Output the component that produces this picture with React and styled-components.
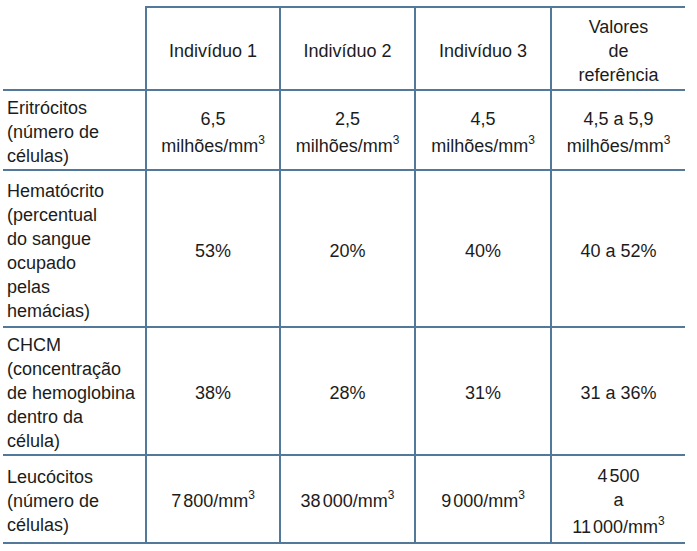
import React from 'react';
import styled, { createGlobalStyle } from 'styled-components';

const GlobalStyle = createGlobalStyle`
  html, body {
    margin: 0;
    padding: 0;
    background: #ffffff;
  }
  body {
    font-family: "Liberation Sans", Arial, sans-serif;
    color: #1c1c1c;
  }
`;

const LINE = '2px solid #52789a';

const Table = styled.table`
  border-collapse: collapse;
  table-layout: fixed;
  width: 682px;
  margin: 6px 0 0 3px;
  font-size: 18px;
  line-height: 24px;
`;

const Row = styled.tr`
  height: ${p => p.h}px;
  border-bottom: ${LINE};
`;

const Cell = styled.td`
  padding: 4px 4px 0;
  vertical-align: middle;
  text-align: ${p => (p.label ? 'left' : 'center')};
  border-left: ${p => (p.label ? 'none' : LINE)};
  border-top: ${p => (p.blank ? 'none' : LINE)};
`;

// a line that carries a superscript sits a little lower, as in the source
const SupLine = styled.span`
  display: block;
  margin-top: ${p => p.gap}px;
`;

const Sup = styled.sup`
  font-size: 12px;
  line-height: 0;
  vertical-align: baseline;
  position: relative;
  top: -8px;
`;

// narrow gap between groups of thousands
const Gap = styled.span`
  display: inline-block;
  width: 2px;
`;

const Num = ({ a, b }) => (
  <>
    {a}
    <Gap />
    {b}
  </>
);

const Mm3 = ({ children }) => (
  <>
    {children}/mm<Sup>3</Sup>
  </>
);

const rows = [
  {
    h: 80,
    label: ['Eritrócitos', '(número de', 'células)'],
    values: ['6,5', '2,5', '4,5', '4,5 a 5,9'].map(v => (
      <>
        {v}
        <SupLine gap={3}><Mm3>milhões</Mm3></SupLine>
      </>
    )),
  },
  {
    h: 157,
    label: ['Hematócrito', '(percentual', 'do sangue', 'ocupado', 'pelas', 'hemácias)'],
    values: ['53%', '20%', '40%', '40 a 52%'],
  },
  {
    h: 128,
    label: ['CHCM', '(concentração', 'de hemoglobina', 'dentro da', 'célula)'],
    values: ['38%', '28%', '31%', '31 a 36%'],
  },
  {
    h: 88,
    label: ['Leucócitos', '(número de', 'células)'],
    values: [
      <Mm3><Num a="7" b="800" /></Mm3>,
      <Mm3><Num a="38" b="000" /></Mm3>,
      <Mm3><Num a="9" b="000" /></Mm3>,
      <>
        <Num a="4" b="500" /><br />a
        <SupLine gap={3}><Mm3><Num a="11" b="000" /></Mm3></SupLine>
      </>,
    ],
  },
];

export default function App() {
  return (
    <>
      <GlobalStyle />
      <Table>
        <colgroup>
          <col style={{ width: 143 }} />
          <col style={{ width: 134 }} />
          <col style={{ width: 135 }} />
          <col style={{ width: 136 }} />
          <col style={{ width: 134 }} />
        </colgroup>
        <tbody>
          <Row h={83}>
            <Cell label blank />
            <Cell>Indivíduo 1</Cell>
            <Cell>Indivíduo 2</Cell>
            <Cell>Indivíduo 3</Cell>
            <Cell>Valores<br />de<br />referência</Cell>
          </Row>
          {rows.map((r, i) => (
            <Row key={i} h={r.h}>
              <Cell label>
                {r.label.map((l, j) => (
                  <React.Fragment key={j}>
                    {j > 0 && <br />}
                    {l}
                  </React.Fragment>
                ))}
              </Cell>
              {r.values.map((v, j) => (
                <Cell key={j}>{v}</Cell>
              ))}
            </Row>
          ))}
        </tbody>
      </Table>
    </>
  );
}
